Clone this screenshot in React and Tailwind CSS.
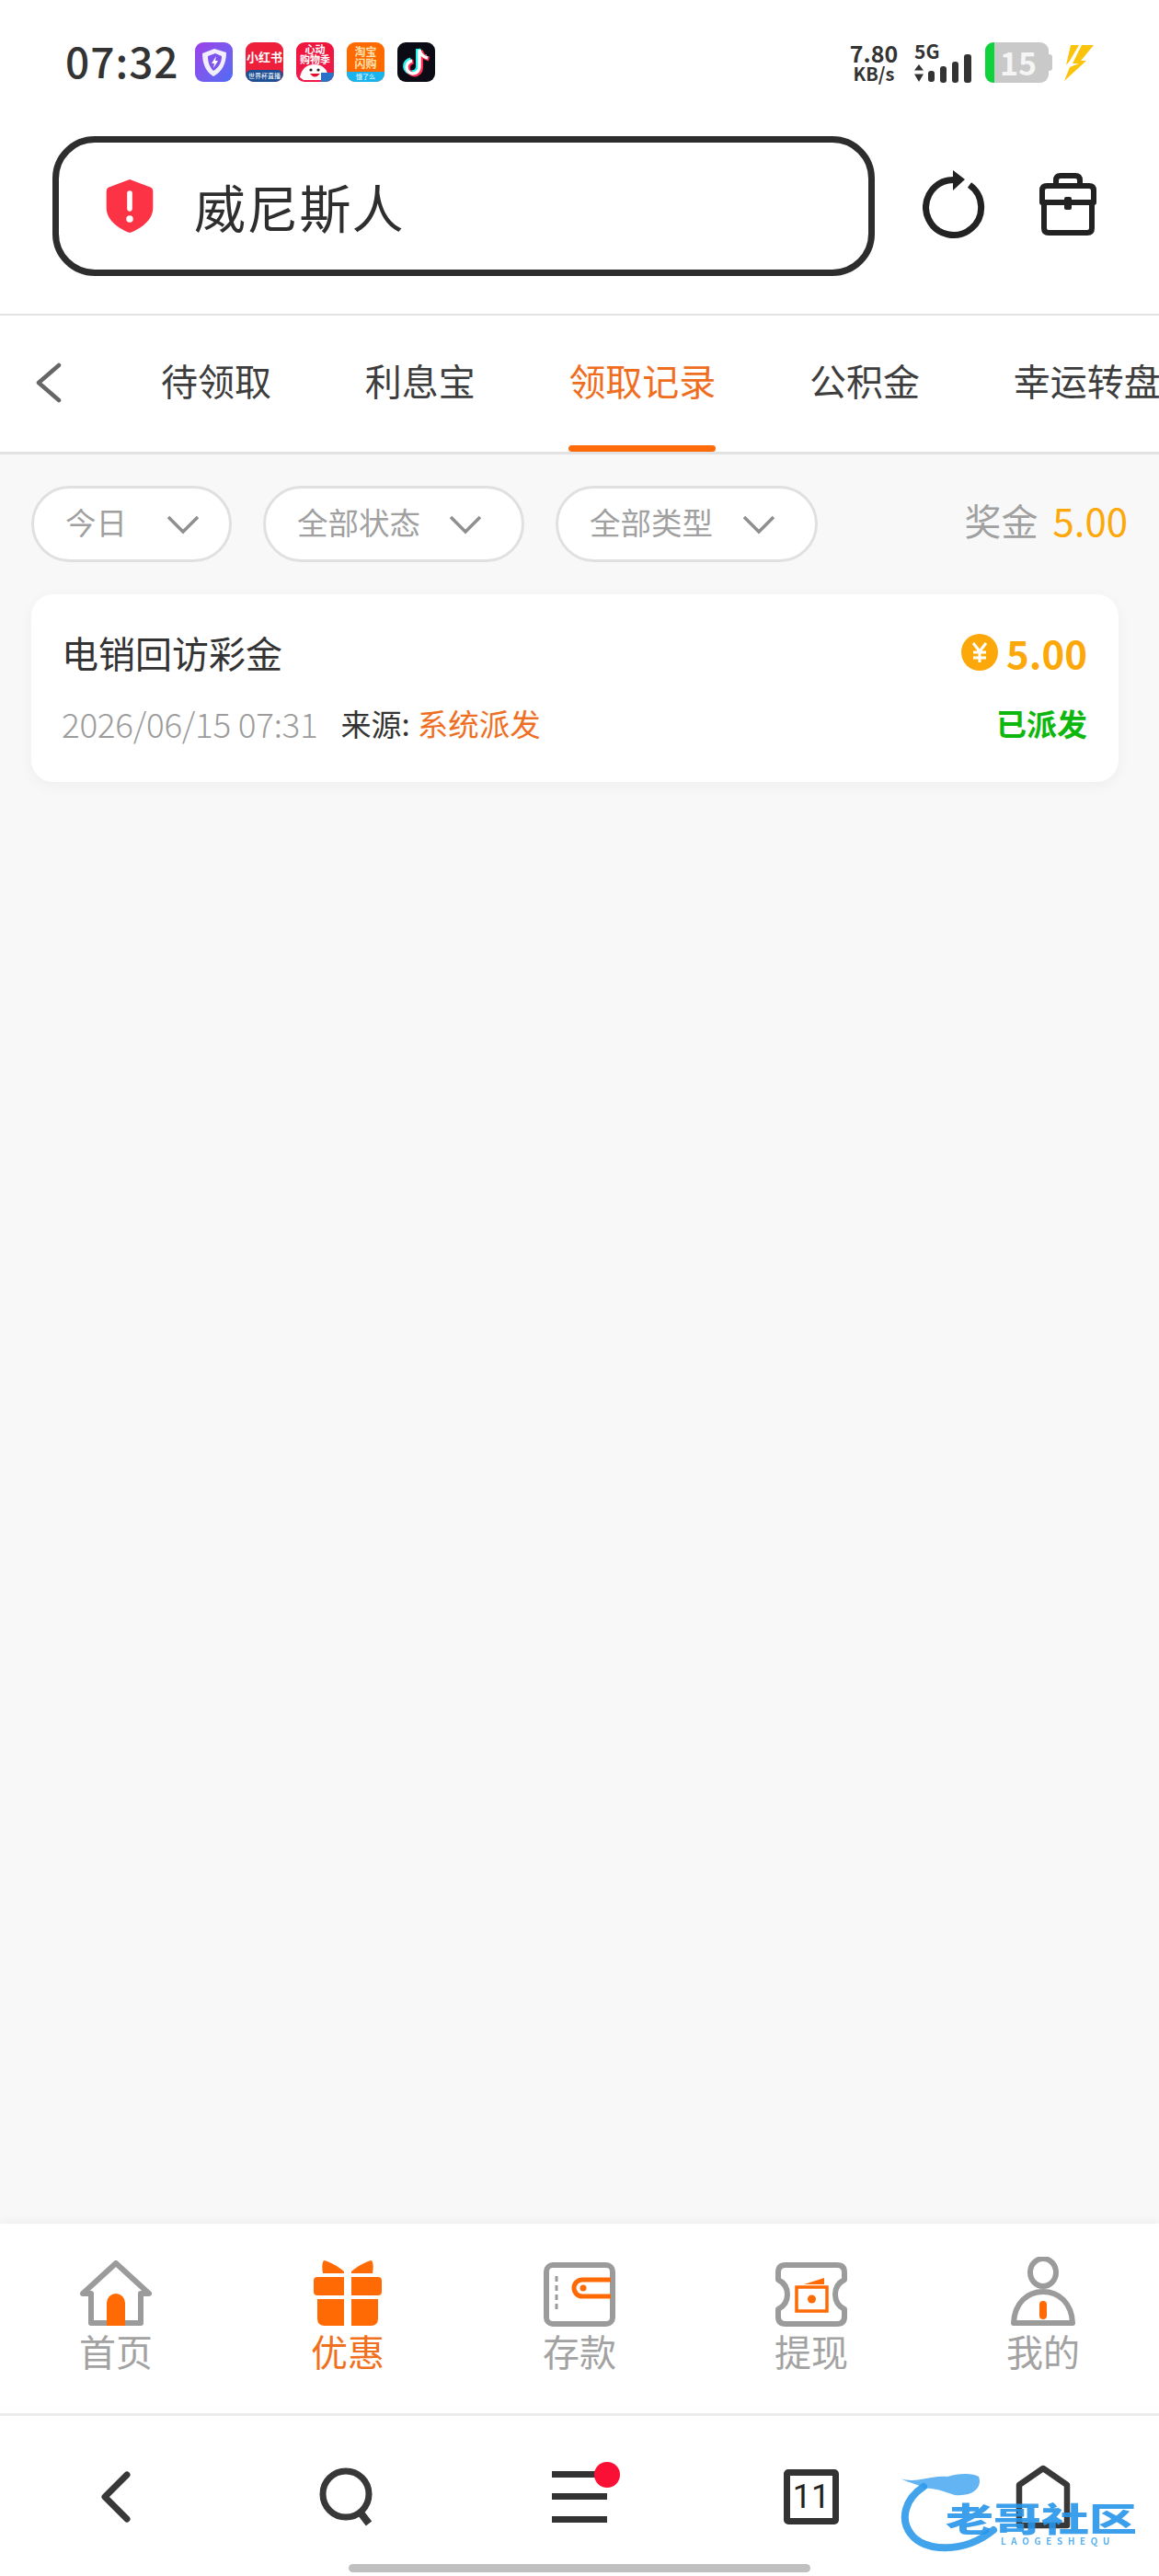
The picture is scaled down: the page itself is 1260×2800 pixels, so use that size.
const cjk = { fontFamily: '"Noto Sans CJK SC", "Noto Sans", sans-serif' };

const AppIcon = ({ className, children }) => (
  <div className={`relative h-[43px] w-[41px] shrink-0 overflow-hidden rounded-[9px] ${className}`}>{children}</div>
);

const StatusBar = () => (
  <div className="flex h-[136px] items-center justify-between pl-[71px] pr-[71px] pb-[1px]">
    <div className="flex items-center">
      <span className="mb-[5px] w-[141px] text-[46px] font-medium leading-none tracking-[1px] text-[#333]">07:32</span>
      <div className="flex gap-[14px]">
        {/* security app */}
        <AppIcon className="bg-gradient-to-br from-[#9b3fe8] to-[#4a6cf5]">
          <svg viewBox="0 0 41 43" className="h-full w-full">
            <path d="M8 12 L21 7 L34 11 C34 24 29 32 20 37 C12 32 8 24 8 12Z" fill="#fff" opacity="0.9" />
            <path d="M14 15 L22 12 L29 15 C29 22 26 27 20 31 C16 27 14 22 14 15Z" fill="#7d55ee" />
            <path d="M23 15 L18 23 L21 23 L20 28 L25 20 L22 20Z" fill="#fff" />
          </svg>
        </AppIcon>
        {/* xiaohongshu */}
        <AppIcon className="flex flex-col bg-[#ee1f3b]">
          <div className="flex h-[30px] items-center justify-center whitespace-nowrap text-[13px] font-bold leading-none text-white">小红书</div>
          <div className="flex flex-1 items-center justify-center whitespace-nowrap rounded-t-[6px] bg-[#1d4f94] text-[7px] leading-none text-white">世界杯直播</div>
        </AppIcon>
        {/* jd */}
        <AppIcon className="bg-gradient-to-b from-[#f0143c] to-[#f01a4a]">
          <div className="pt-[2px] text-center text-[11px] font-bold leading-[11px] text-white">心动<br /><span className="whitespace-nowrap">购物季</span></div>
          <svg viewBox="0 0 41 43" className="absolute inset-0 h-full w-full">
            <path d="M4 38 C6 28 12 24 20 24 C28 24 33 29 34 34 L30 41 L8 41Z" fill="#fff" />
            <circle cx="16" cy="30" r="1.6" fill="#222" />
            <circle cx="24" cy="30" r="1.6" fill="#222" />
            <path d="M15 34 Q20 41 26 34Z" fill="#e01030" />
            <rect x="27" y="33" width="14" height="10" fill="#2a72c8" />
          </svg>
        </AppIcon>
        {/* taobao */}
        <AppIcon className="flex flex-col bg-[#ff6a00]">
          <div className="flex h-[32px] items-center justify-center text-center text-[12px] font-bold leading-[13px] text-[#fde3b0]">淘宝<br />闪购</div>
          <div className="flex flex-1 items-center justify-center whitespace-nowrap bg-[#19b4ee] text-[7px] leading-none text-white">饿了么</div>
        </AppIcon>
        {/* tiktok */}
        <AppIcon className="bg-[#0a0b14]">
          <svg viewBox="0 0 41 43" className="h-full w-full" fill="none" strokeWidth="5">
            <path d="M24 8 V27 A7 7 0 1 1 16 20 M24 8 C25 13 28 16 33 17" stroke="#25f4ee" transform="translate(-1.5 -1)" />
            <path d="M24 8 V27 A7 7 0 1 1 16 20 M24 8 C25 13 28 16 33 17" stroke="#fe2c55" transform="translate(1.5 1)" />
            <path d="M24 8 V27 A7 7 0 1 1 16 20 M24 8 C25 13 28 16 33 17" stroke="#fff" strokeWidth="3.4" />
          </svg>
        </AppIcon>
      </div>
    </div>
    <div className="flex items-center">
      <div className="flex w-[54px] flex-col items-center text-[#333]">
        <span className="text-[25px] font-bold leading-[24px]">7.80</span>
        <span className="whitespace-nowrap text-[20px] font-bold leading-[21px]">KB/s</span>
      </div>
      <div className="ml-[17px] flex h-[44px] w-[64px] flex-col justify-between">
        <span className="text-[21px] font-bold leading-[18px] text-[#333]">5G</span>
        <svg viewBox="0 0 64 26" className="h-[26px] w-[64px] overflow-visible fill-[#333]">
          <path d="M5 6 L0 12.5 H10Z M5 25 L0 16.5 H10Z" />
          <rect x="15" y="13" width="7" height="12" rx="3" />
          <rect x="28" y="8" width="7" height="18" rx="3" />
          <rect x="41" y="3" width="7" height="23" rx="3" />
          <rect x="54" y="-5" width="8" height="31" rx="3" />
        </svg>
      </div>
      <div className="relative ml-[13px] flex h-[44px] w-[69px] items-center overflow-hidden rounded-[9px] bg-[#c9c9c9]">
        <div className="h-full w-[10px] bg-[#10d23c]" />
        <span className="ml-[6px] text-[34px] font-bold leading-none text-[#f5f5f5]">15</span>
      </div>
      <div className="h-[18px] w-[4px] rounded-r-[3px] bg-[#c9c9c9]" />
      <svg viewBox="0 0 34 42" className="ml-[11px] h-[42px] w-[34px] fill-[#fcc30b]">
        <path d="M9 2 H18 L8 19 L4 24Z" />
        <path d="M21 2 H34 L20 19 H26 L2 41 L8 26 L18 22 H11Z" />
      </svg>
    </div>
  </div>
);

const AddressBar = () => (
  <div className="flex h-[207px] items-start border-b-[2px] border-[#e2e2e2] pl-[57px]">
    <div className="mt-[12px] flex h-[152px] w-[894px] items-center rounded-[46px] border-[7px] border-[#2d2d2d] pl-[50px]">
      <svg viewBox="0 0 54 64" className="h-[60px] w-[54px]">
        <path d="M27 1 L51 10 C53 11 54 12 54 15 V34 C54 48 40 58 27 63 C14 58 0 48 0 34 V15 C0 12 1 11 3 10Z" fill="#fb3344" />
        <rect x="24" y="14" width="6" height="24" rx="3" fill="#fff" />
        <circle cx="27" cy="47" r="4" fill="#fff" />
      </svg>
      <span className="ml-[43px] text-[56px] leading-none tracking-[1.2px] text-[#2e2e2e]">威尼斯人</span>
    </div>
    <svg viewBox="0 0 72 76" className="ml-[52px] mt-[48px] h-[76px] w-[72px]" fill="none" stroke="#222" strokeWidth="7">
      <path d="M51 17 A30 30 0 1 1 28 12 L40 11" />
      <path d="M33 1 L46 11 L33 23Z" fill="#222" stroke="none" />
    </svg>
    <svg viewBox="0 0 68 68" className="ml-[52px] mt-[52px] h-[68px] w-[68px]" fill="none" stroke="#222" strokeWidth="6">
      <path d="M21 14 V8 Q21 3 26 3 H42 Q47 3 47 8 V14" />
      <path d="M6 32 V19 Q6 14 11 14 H57 Q62 14 62 19 V32Z" strokeLinejoin="round" />
      <path d="M8 32 V60 Q8 65 13 65 H55 Q60 65 60 60 V32" />
      <rect x="30" y="26" width="8" height="14" rx="2" fill="#222" stroke="none" />
    </svg>
  </div>
);

const Tabs = () => (
  <div className="flex h-[151px] items-stretch overflow-hidden border-b-[3px] border-[#e2e2e2] bg-white">
    <div className="flex w-[175px] shrink-0 items-center pl-[38px] pb-[2px]">
      <svg viewBox="0 0 30 44" className="h-[44px] w-[30px]" fill="none" stroke="#666" strokeWidth="4.5" strokeLinecap="round" strokeLinejoin="round">
        <path d="M26 3 L4 22 L26 41" />
      </svg>
    </div>
    <div className="flex gap-[101.7px] whitespace-nowrap text-[40px] leading-none text-[#3d3d3d]">
      <div className="flex items-center pb-[8px]">待领取</div>
      <div className="flex items-center pb-[8px]">利息宝</div>
      <div className="relative flex items-center pb-[8px] text-[#ef6d1f]">
        领取记录
        <div className="absolute bottom-0 left-0 h-[7px] w-full rounded-full bg-[#ff6a0a]" />
      </div>
      <div className="flex items-center pb-[8px]">公积金</div>
      <div className="flex items-center pb-[8px]">幸运转盘</div>
    </div>
  </div>
);

const Chevron = () => (
  <svg viewBox="0 0 36 22" className="h-[22px] w-[36px]" fill="none" stroke="#8f8f8f" strokeWidth="3.5" strokeLinejoin="miter">
    <path d="M2 3 L18 19 L34 3" />
  </svg>
);

const FilterPill = ({ label, className }) => (
  <div className={`flex h-[83px] items-center justify-between rounded-full border-[3px] border-[#e0e0e0] bg-white pl-[34px] ${className}`}>
    <span className="pb-[5px] text-[33.5px] leading-none text-[#a0a0a0]">{label}</span>
    <Chevron />
  </div>
);

const Filters = () => (
  <div className="flex items-center pl-[34px] pr-[34px] pt-[34px]">
    <FilterPill label="今日" className="w-[218px] pr-[32px]" />
    <FilterPill label="全部状态" className="ml-[34px] w-[284px] pr-[43px]" />
    <FilterPill label="全部类型" className="ml-[34px] w-[285px] pr-[43px]" />
    <div className="ml-auto flex items-center pb-[9px] leading-none">
      <span className="text-[40px] text-[#a0a0a0]">奖金</span>
      <span className="ml-[16px] text-[42px] text-[#fca80a]">5.00</span>
    </div>
  </div>
);

const RecordCard = () => (
  <div className="ml-[34px] mr-[44px] mt-[35px] h-[204px] rounded-[24px] bg-white pl-[33px] pr-[34px] pt-[38px] shadow-[0_4px_14px_rgba(120,90,80,0.06)]">
    <div className="flex h-[50px] items-center justify-between">
      <span className="text-[40px] leading-none text-[#333]">电销回访彩金</span>
      <div className="flex items-center">
        <svg viewBox="0 0 40 40" className="h-[40px] w-[40px]">
          <circle cx="20" cy="20" r="20" fill="#fca80a" />
          <path d="M13 10 L20 19 L27 10 M20 19 V31 M13 20 H27 M13 26 H27" fill="none" stroke="#fff" strokeWidth="3" />
        </svg>
        <span className="ml-[9px] text-[42px] font-bold leading-none text-[#fca80a]">5.00</span>
      </div>
    </div>
    <div className="mt-[32px] flex h-[40px] items-center">
      <span className="text-[36.9px] font-light leading-none tracking-[-0.3px] text-[#9c9c9c]">2026/06/15 07:31</span>
      <span className="ml-[25px] text-[33px] leading-none text-[#333]">来源:</span>
      <span className="ml-[8px] text-[33.5px] leading-none text-[#ee6f24]">系统派发</span>
      <span className="ml-auto text-[33px] font-bold leading-none text-[#0db70d]">已派发</span>
    </div>
  </div>
);

const gray = "#9b9b9b";
const orange = "#ff6a05";

const HomeIcon = () => (
  <svg viewBox="0 0 80 72" className="h-[72px] w-[80px]">
    <path d="M4 36 L40 3 L76 36 H67 V68 H13 V36Z" fill="none" stroke={gray} strokeWidth="6" strokeLinejoin="round" />
    <path d="M30 71 V46 A10 10 0 0 1 50 46 V71Z" fill={orange} />
  </svg>
);

const GiftIcon = () => (
  <svg viewBox="0 0 74 74" className="h-[74px] w-[74px]" fill={orange}>
    <path d="M11 2 C17 3 26 8 33 14 V16 H10 C9 10 9 5 11 2Z" />
    <path d="M63 2 C57 3 48 8 41 14 V16 H64 C65 10 65 5 63 2Z" />
    <path d="M4 20 H33 V40 H4 Q0 40 0 36 V24 Q0 20 4 20Z" />
    <path d="M41 20 H70 Q74 20 74 24 V36 Q74 40 70 40 H41Z" />
    <path d="M4 44 H33 V73 H12 Q4 73 4 65Z" />
    <path d="M41 44 H70 V65 Q70 73 62 73 H41Z" />
  </svg>
);

const WalletIcon = () => (
  <svg viewBox="0 0 78 70" className="h-[70px] w-[78px]">
    <rect x="3" y="3" width="72" height="64" rx="7" fill="none" stroke={gray} strokeWidth="6" />
    <path d="M14 15 V54" stroke={gray} strokeWidth="3" strokeDasharray="6 4" />
    <path d="M73 19 H42 A9 9 0 0 0 42 37 H73" fill="none" stroke={orange} strokeWidth="5" />
    <circle cx="43" cy="28" r="3.5" fill={orange} />
  </svg>
);

const TicketIcon = () => (
  <svg viewBox="0 0 78 70" className="h-[70px] w-[78px]">
    <path d="M11 3 H67 Q75 3 75 11 V19 Q65 24 65 35 Q65 46 75 51 V59 Q75 67 67 67 H11 Q3 67 3 59 V51 Q13 46 13 35 Q13 24 3 19 V11 Q3 3 11 3Z" fill="none" stroke={gray} strokeWidth="6" strokeLinejoin="round" />
    <rect x="23" y="27" width="33" height="26" fill="none" stroke={orange} strokeWidth="3.5" />
    <path d="M31 24 L53 17 V24Z" fill={orange} />
    <circle cx="39.5" cy="40" r="4.5" fill={orange} />
  </svg>
);

const UserIcon = () => (
  <svg viewBox="0 0 70 76" className="h-[76px] w-[70px]">
    <ellipse cx="35" cy="17" rx="14" ry="15" fill="none" stroke={gray} strokeWidth="6" />
    <path d="M3 72 C4 50 18 38 35 38 C52 38 66 50 67 72Z" fill="none" stroke={gray} strokeWidth="6" strokeLinejoin="round" />
    <rect x="31" y="48" width="8" height="20" rx="4" fill={orange} />
  </svg>
);

const NavItem = ({ icon, label, active }) => (
  <div className="flex flex-1 flex-col items-center">
    <div className="flex h-[74px] items-end">{icon}</div>
    <span className={`mt-[2px] text-[40px] leading-[48px] ${active ? "text-[#f07020]" : "text-[#a2a2a2]"}`}>{label}</span>
  </div>
);

const BottomNav = () => (
  <div className="flex h-[209px] border-b-[3px] border-[#ececec] bg-white pt-[38px] shadow-[0_-3px_8px_rgba(0,0,0,0.04)]">
    <NavItem icon={<HomeIcon />} label="首页" />
    <NavItem icon={<GiftIcon />} label="优惠" active />
    <NavItem icon={<WalletIcon />} label="存款" />
    <NavItem icon={<TicketIcon />} label="提现" />
    <NavItem icon={<UserIcon />} label="我的" />
  </div>
);

const SystemNav = () => (
  <div className="relative flex h-[174px] flex-col bg-white">
    <div className="flex h-[161px] items-center pt-[14px]">
      <div className="flex flex-1 justify-center">
        <svg viewBox="0 0 34 56" className="h-[56px] w-[34px]" fill="none" stroke="#383838" strokeWidth="7" strokeLinecap="round" strokeLinejoin="round">
          <path d="M29 4 L5 28 L29 52" />
        </svg>
      </div>
      <div className="flex flex-1 justify-center">
        <svg viewBox="0 0 62 64" className="h-[64px] w-[62px]" fill="none" stroke="#383838" strokeWidth="7">
          <circle cx="29" cy="29" r="25" />
          <path d="M44 48 L54 61" strokeWidth="8" />
        </svg>
      </div>
      <div className="flex flex-1 justify-center">
        <div className="relative flex h-[56px] w-[60px] flex-col justify-between">
          <div className="h-[7px] bg-[#333]" />
          <div className="h-[7px] bg-[#333]" />
          <div className="h-[7px] bg-[#333]" />
          <div className="absolute right-[-14px] top-[-10px] h-[28px] w-[28px] rounded-full bg-[#fa0f35]" />
        </div>
      </div>
      <div className="flex flex-1 justify-center">
        <div className="flex h-[60px] w-[60px] items-center justify-center rounded-[5px] border-[7px] border-[#333] font-['Roboto'] text-[36px] leading-none text-[#222]">11</div>
      </div>
      <div className="flex flex-1 justify-center">
        <svg viewBox="0 0 60 70" className="h-[70px] w-[60px]" fill="none" stroke="#383838" strokeWidth="6.5" strokeLinejoin="round">
          <path d="M30 4 L56 22 V66 H4 V22Z" />
        </svg>
      </div>
    </div>
    <div className="mx-auto h-[9px] w-[502px] rounded-full bg-[#c0c0c0]" />
    {/* forum watermark sits over the nav */}
    <div className="absolute left-[978px] top-[60px] h-[92px] w-[264px] blur-[0.5px]">
      <svg viewBox="0 0 264 92" className="absolute inset-0 h-full w-full" fill="none">
        <path d="M26 17 C6 30 0 52 12 68 C26 88 70 90 102 64" stroke="#2193ea" strokeWidth="8" strokeLinecap="round" opacity="0.85" />
        <path d="M1 8 C18 14 34 4 52 6 C64 2 80 2 86 6 C90 16 82 28 60 26 C48 22 38 18 26 19 C22 14 12 14 1 8Z" fill="#2e9bef" opacity="0.75" />
      </svg>
      <span className="absolute left-[50px] top-[32px] origin-top-left scale-y-[0.7] whitespace-nowrap text-[52px] font-black leading-none text-[#2795ea]/90">老哥社区</span>
      <span className="absolute left-[110px] top-[71px] whitespace-nowrap text-[10px] font-bold leading-none tracking-[5.6px] text-[#5fb3ee]">LAOGESHEQU</span>
    </div>
  </div>
);

export default function App() {
  return (
    <div style={cjk} className="flex h-[2800px] w-[1260px] flex-col overflow-hidden bg-white">
      <StatusBar />
      <AddressBar />
      <Tabs />
      <div className="flex flex-1 flex-col bg-[#f8f8f8]">
        <Filters />
        <RecordCard />
      </div>
      <BottomNav />
      <SystemNav />
    </div>
  );
}
